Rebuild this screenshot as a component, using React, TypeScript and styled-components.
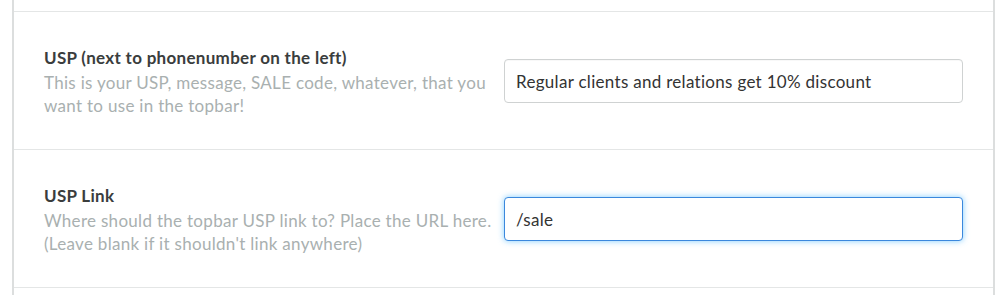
import React, { FC } from "react";
import styled, { createGlobalStyle } from "styled-components";

const GlobalStyle = createGlobalStyle`
  body {
    margin: 0;
    background: #ffffff;
    font-family: Lato, "Open Sans", "Liberation Sans", sans-serif;
    overflow: hidden;
  }
`;

const Panel = styled.div`
  box-sizing: border-box;
  width: 983px;
  margin-left: 12px;
  border-left: 2px solid #dcdede;
  border-right: 2px solid #dcdede;
  background: #ffffff;
`;

const Spacer = styled.div<{ $height: number }>`
  height: ${(p) => p.$height}px;
  border-bottom: 1px solid #e4e6e6;
`;

const Row = styled.div`
  box-sizing: border-box;
  display: grid;
  grid-template-columns: 446px 459px;
  column-gap: 14px;
  align-items: center;
  height: 138px;
  padding: 0 30px;
  border-bottom: 1px solid #e4e6e6;
`;

const Label = styled.div`
  display: flex;
  flex-direction: column;
  padding-top: 2px;
`;

const Title = styled.span`
  font-weight: 700;
  font-size: 17px;
  letter-spacing: 0.3px;
  line-height: 22px;
  color: #3a3d3d;
  margin-bottom: 2px;
`;

const Description = styled.span`
  font-size: 17px;
  letter-spacing: 0.3px;
  line-height: 23px;
  color: #a9b0b0;
  white-space: nowrap;
`;

const Input = styled.input<{ $focused?: boolean }>`
  box-sizing: border-box;
  width: 100%;
  height: 44px;
  padding: 0 11px;
  font-family: Lato, "Open Sans", "Liberation Sans", sans-serif;
  font-size: 17px;
  letter-spacing: 0.3px;
  color: #333333;
  background: #ffffff;
  border: 1px solid ${(p) => (p.$focused ? "#3b88dd" : "#cfd2d2")};
  border-radius: 4px;
  outline: none;
  box-shadow: ${(p) =>
    p.$focused
      ? "0 0 6px rgba(90, 190, 255, 0.75)"
      : "inset 0 1px 1px rgba(0, 0, 0, 0.03)"};
  margin-top: 1px;
`;

type FieldProps = {
  title: string;
  description: string[];
  value: string;
  focused?: boolean;
};

const Field: FC<FieldProps> = ({ title, description, value, focused }) => (
  <Row>
    <Label>
      <Title>{title}</Title>
      <Description>
        {description.map((line, i) => (
          <React.Fragment key={i}>
            {line}
            {i < description.length - 1 && <br />}
          </React.Fragment>
        ))}
      </Description>
    </Label>
    <Input defaultValue={value} $focused={focused} readOnly />
  </Row>
);

export default function App() {
  return (
    <>
      <GlobalStyle />
      <Panel>
        <Spacer $height={11} />
        <Field
          title="USP (next to phonenumber on the left)"
          description={[
            "This is your USP, message, SALE code, whatever, that you",
            "want to use in the topbar!",
          ]}
          value="Regular clients and relations get 10% discount"
        />
        <Field
          title="USP Link"
          description={[
            "Where should the topbar USP link to? Place the URL here.",
            "(Leave blank if it shouldn't link anywhere)",
          ]}
          value="/sale"
          focused
        />
        <Spacer $height={20} />
      </Panel>
    </>
  );
}
